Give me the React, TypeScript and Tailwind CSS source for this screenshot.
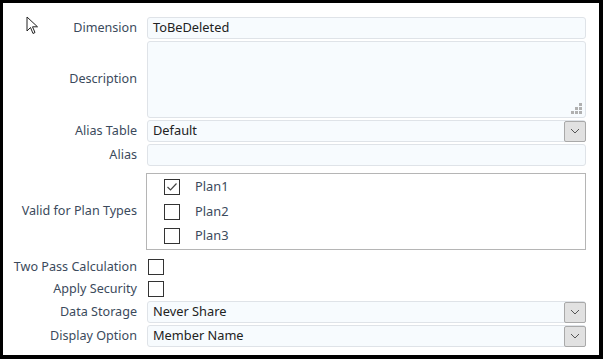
import React from "react";

const font = { fontFamily: "'Noto Sans', 'DejaVu Sans', sans-serif" };

const Chevron = () => (
  <svg width="10" height="6" viewBox="0 0 10 6" fill="none">
    <path d="M1 1 L5 5 L9 1" stroke="#555" strokeWidth="1" />
  </svg>
);

const Check = ({ checked }: { checked?: boolean }) => (
  <div className="w-[16px] h-[16px] border border-[#333] bg-white flex items-center justify-center shrink-0">
    {checked && (
      <svg width="12" height="10" viewBox="0 0 12 10" fill="none">
        <path d="M1.5 5 L4.5 8 L10.5 1.5" stroke="#444" strokeWidth="1.2" />
      </svg>
    )}
  </div>
);

const Row = ({ label, className, children }: { label: string; className?: string; children: React.ReactNode }) => (
  <div className={"flex items-center " + (className || "")}>
    <div className="w-[135px] text-right text-[12.6px] text-[#3b4a5c] pr-px leading-none">{label}</div>
    <div className="ml-[9px] flex-1 flex items-center">{children}</div>
  </div>
);

const Select = ({ value }: { value: string }) => (
  <div className="w-[439px] h-[22px] flex items-center border border-[#dfe3e8] rounded-[3px] bg-[#f7fbfe]">
    <div className="flex-1 pl-[5px] text-[12.8px] text-[#222]">{value}</div>
    <div className="w-[22px] h-[21px] mr-[-1px] border border-[#a9a9a9] bg-[#e1e1e1] rounded-[2px] flex items-center justify-center">
      <Chevron />
    </div>
  </div>
);

const Dot = () => <span className="w-[3px] h-[3px] bg-[#b0b0b0]" />;

export default function App() {
  return (
    <div className="w-[603px] h-[359px] bg-black pt-[3px] pl-[3px] pr-[4px] pb-[4px]" style={font}>
      <div className="relative w-full h-full bg-white pt-[14px] flex flex-col">
        <svg className="absolute left-[23px] top-[13px]" width="14" height="20" viewBox="0 0 14 20" fill="none">
          <path d="M1 1 L1 15 L4.5 11.5 L7 17.5 L9 16.5 L6.5 10.8 L11.5 10.8 Z" fill="white" stroke="#222" strokeWidth="1" strokeLinejoin="miter" />
        </svg>

        <Row label="Dimension">
          <div className="w-[439px] h-[22px] border border-[#dfe3e8] rounded-[3px] bg-[#f7fbfe] pl-[5px] flex items-center text-[12.8px] text-[#222]">
            ToBeDeleted
          </div>
        </Row>

        <Row label="Description" className="mt-[2px]">
          <div className="relative w-[439px] h-[77px] border border-[#dfe3e8] rounded-[3px] bg-[#f7fbfe]">
            <div className="absolute right-[3px] bottom-[3px] grid grid-cols-3 gap-[1px]">
              <span />
              <span />
              <Dot />
              <span />
              <Dot />
              <Dot />
              <Dot />
              <Dot />
              <Dot />
            </div>
          </div>
        </Row>

        <Row label="Alias Table" className="mt-[2px]">
          <Select value="Default" />
        </Row>

        <Row label="Alias" className="mt-[2px]">
          <div className="w-[439px] h-[22px] border border-[#dfe3e8] rounded-[3px] bg-[#f7fbfe]" />
        </Row>

        <Row label="Valid for Plan Types" className="mt-[7px]">
          <div className="w-[440px] h-[77px] -ml-px border border-[#b5b5b5] bg-white flex flex-col pt-[5px] pl-[17px] gap-[8.5px]">
            {["Plan1", "Plan2", "Plan3"].map((p, i) => (
              <div key={p} className="flex items-center h-[16px]">
                <Check checked={i === 0} />
                <span className="ml-[15px] text-[12.8px] text-[#3b4a5c]">{p}</span>
              </div>
            ))}
          </div>
        </Row>

        <Row label="Two Pass Calculation" className="mt-[9px]">
          <div className="ml-px">
            <Check />
          </div>
        </Row>

        <Row label="Apply Security" className="mt-[6px]">
          <div className="ml-px">
            <Check />
          </div>
        </Row>

        <Row label="Data Storage" className="mt-[4px]">
          <Select value="Never Share" />
        </Row>

        <Row label="Display Option" className="mt-[2px]">
          <Select value="Member Name" />
        </Row>
      </div>
    </div>
  );
}
